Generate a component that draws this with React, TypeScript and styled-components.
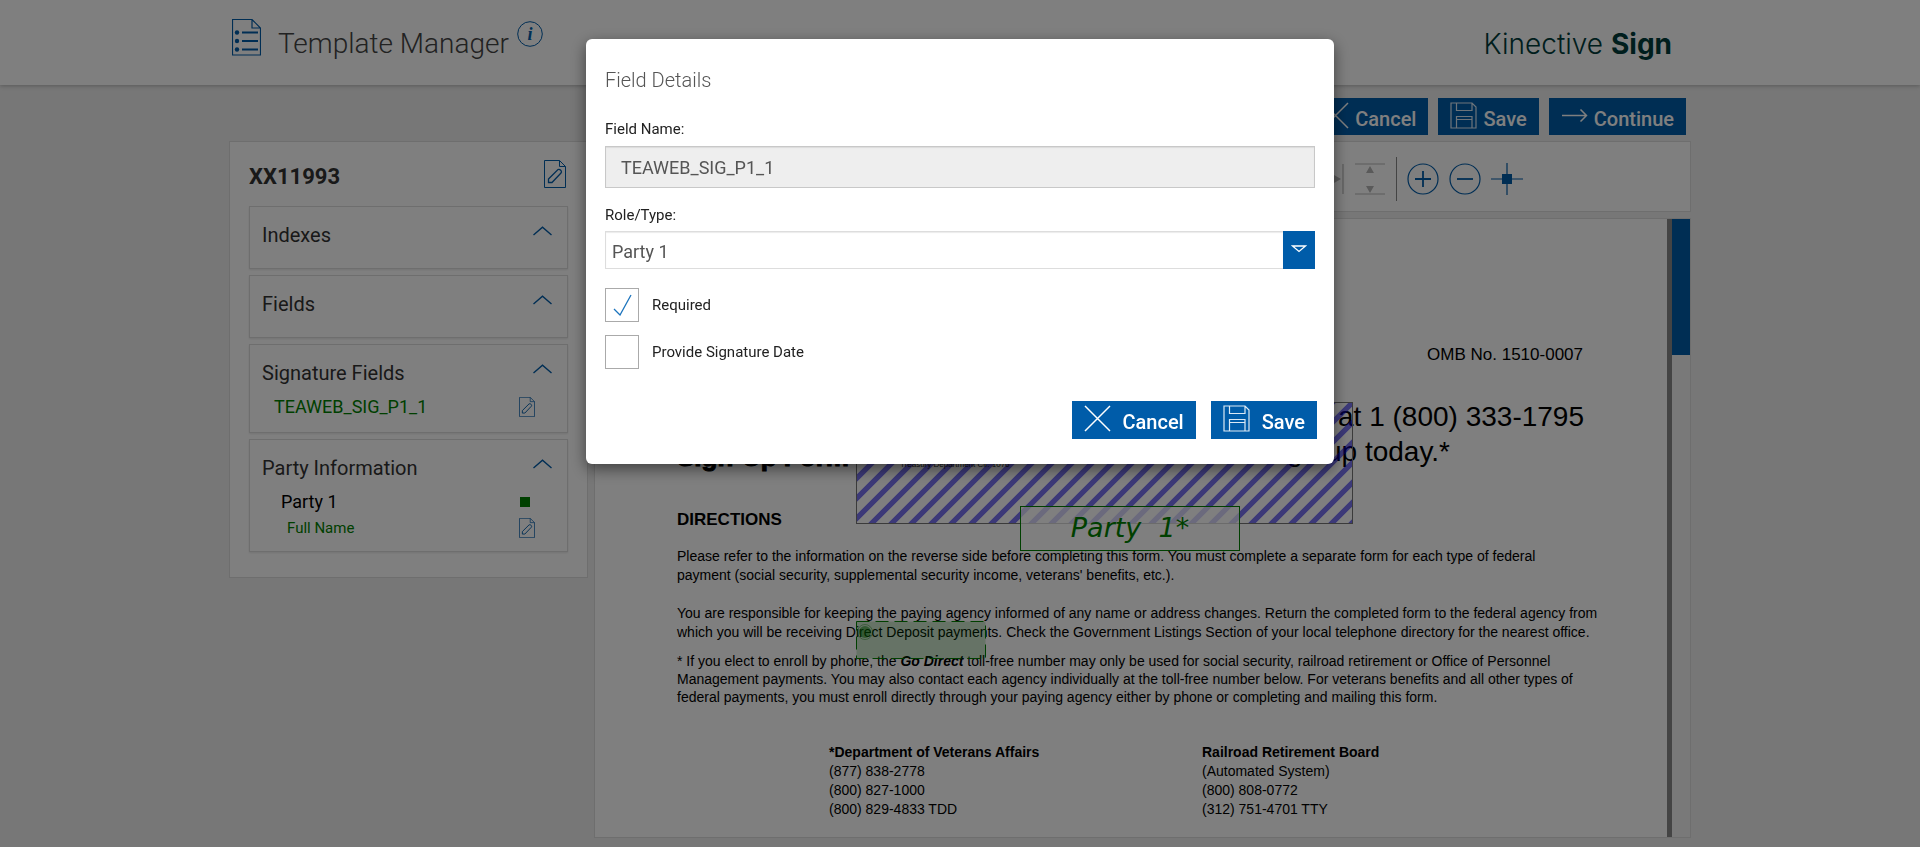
import React from "react";
import styled, { createGlobalStyle, css } from "styled-components";

const Global = createGlobalStyle`
  *, *::before, *::after { box-sizing: border-box; }
  body { margin: 0; background: #eee; font-family: Roboto, "Liberation Sans", sans-serif; color: #333; }
  button, input, select { font-family: inherit; }
  h1, h2, h3, p { margin: 0; font-weight: 400; }
  svg { display: block; flex: none; }
`;

const BLUE = "#005ca9";
const LINE = "#ddd";

const Page = styled.div`
  display: flex;
  flex-direction: column;
  min-height: 100vh;
`;

const Bounds = styled.div`
  width: 100%;
  max-width: 1462px;
  margin: 0 auto;
`;

const Header = styled.header`
  background: #fff;
  height: 85px;
  box-shadow: 0 1px 4px rgba(0, 0, 0, 0.25);
`;

const HeaderRow = styled(Bounds)`
  display: flex;
  align-items: flex-start;
  justify-content: space-between;
  padding: 0 19px 0 3px;
`;

const Brand = styled.div`
  display: flex;
  align-items: flex-start;
  padding-top: 19px;
`;

const AppTitle = styled.h1`
  font-size: 28px;
  line-height: 36px;
  font-weight: 300;
  color: #444;
  padding: 7px 8px 0 17px;
`;

const InfoButton = styled.button`
  border: 0;
  background: none;
  padding: 2px 0 0;
`;

const Logo = styled.div`
  padding-top: 26px;
  font-family: Inter, sans-serif;
  font-size: 28px;
  line-height: 36px;
  font-weight: 300;
  color: #003c3a;
  b { font-weight: 700; }
`;

const ActionBar = styled.div`
  display: flex;
  justify-content: flex-end;
  gap: 10px;
  padding: 13px 5px 6px;
`;

const Button = styled.button<{ $roomy?: boolean }>`
  display: flex;
  align-items: flex-start;
  gap: ${(p) => (p.$roomy ? 12 : 6)}px;
  height: ${(p) => (p.$roomy ? 38 : 37)}px;
  padding: 4px 12px 0;
  border: 0;
  background: ${BLUE};
  color: #fff;
  font-size: 20px;
  line-height: 34px;
  font-weight: 500;
`;

const Columns = styled.main`
  display: grid;
  grid-template-columns: 359px minmax(0, 1fr);
  gap: 6px;
  align-items: start;
`;

const panel = css`
  background: #fff;
  border: 1px solid ${LINE};
`;

const Sidebar = styled.aside`
  ${panel}
  padding: 18px 19px 25px;
`;

const SidebarHead = styled.div`
  display: flex;
  justify-content: space-between;
  align-items: flex-start;
  height: 46px;
  padding-right: 2px;
`;

const TemplateName = styled.h2`
  font-size: 22px;
  line-height: 34px;
  font-weight: 700;
`;

const Section = styled.section<{ $height: number }>`
  border: 1px solid ${LINE};
  box-shadow: 0 1px 2px rgba(0, 0, 0, 0.1);
  min-height: ${(p) => p.$height}px;
  padding: 14px 15px 0 12px;
  & + & { margin-top: 6px; }
`;

const SectionHead = styled.div`
  display: flex;
  justify-content: space-between;
  font-size: 20px;
  line-height: 28px;
  h3 { font-size: inherit; }
`;

const Toggle = styled.button`
  border: 0;
  background: none;
  padding: 5px 0 3px;
  height: 18px;
`;

const Entry = styled.div<{ $indent: number; $size: number; $tone: string }>`
  display: flex;
  justify-content: space-between;
  align-items: center;
  padding: 0 17px 0 ${(p) => p.$indent}px;
  font-size: ${(p) => p.$size}px;
  line-height: 26px;
  color: ${(p) => p.$tone};
`;

const EntryList = styled.div`
  padding-top: 7px;
`;

const IconButton = styled.button`
  border: 0;
  background: none;
  padding: 0;
`;

const Swatch = styled.span`
  width: 10px;
  height: 10px;
  margin-right: 5px;
  background: green;
`;

const Workspace = styled.div`
  display: flex;
  flex-direction: column;
  gap: 6px;
`;

const Toolbar = styled.div`
  ${panel}
  display: flex;
  justify-content: flex-end;
  align-items: center;
  gap: 10px;
  height: 71px;
  padding: 5px 167px 0 0;
`;

const Separator = styled.span`
  width: 1px;
  height: 44px;
  background: #888;
`;

const Viewer = styled.div`
  ${panel}
  display: flex;
  height: 620px;
`;

const Paper = styled.article`
  position: relative;
  flex: 1;
  min-width: 0;
  padding: 122px 30px 0 82px;
  font-family: "Liberation Sans", Arial, sans-serif;
  font-size: 14px;
  color: #000;
`;

const FormNumber = styled.p`
  font-size: 17px;
  line-height: 28px;
  text-align: right;
  padding-right: 54px;
`;

const FormIntro = styled.div`
  display: flex;
  justify-content: space-between;
  align-items: flex-end;
  padding: 30px 53px 0 0;
`;

const FormTitle = styled.h2`
  font-family: "Liberation Sans", sans-serif;
  font-size: 26px;
  line-height: 24px;
  font-weight: 700;
  -webkit-text-stroke: 1px #000;
`;

const Invite = styled.p`
  font-size: 28px;
  line-height: 35px;
  text-align: right;
  span { display: block; padding-right: 134px; }
`;

const DocHeading = styled.h3`
  font-size: 17px;
  line-height: 28px;
  font-weight: 700;
  padding-top: 37px;
  height: 78px;
`;

const Para = styled.p<{ $gap: number; $leading: number }>`
  line-height: ${(p) => p.$leading}px;
  white-space: nowrap;
  margin-bottom: ${(p) => p.$gap}px;
`;

const Contacts = styled.div`
  display: grid;
  grid-template-columns: 373px 1fr;
  padding-left: 152px;
  line-height: 19px;
`;

const Hatch = styled.div`
  position: absolute;
  left: 261px;
  top: 183px;
  width: 497px;
  height: 122px;
  border: 1px solid #777;
  background: linear-gradient(135deg, transparent 27%, rgba(10, 0, 230, 0.55) 29%, rgba(10, 0, 230, 0.55) 46%, transparent 48%, transparent 77%, rgba(10, 0, 230, 0.55) 79%, rgba(10, 0, 230, 0.55) 96%, transparent 98%) 0 0 / 20px 20px;
`;

const HatchNote = styled.span`
  position: absolute;
  left: 43px;
  bottom: 52px;
  font-family: "Liberation Sans", sans-serif;
  font-size: 8px;
  line-height: 12px;
  color: #222;
`;

const SignatureField = styled.div`
  position: absolute;
  left: 425px;
  top: 287px;
  width: 220px;
  height: 45px;
  border: 1px solid green;
  background: rgba(255, 255, 255, 0.7);
  color: green;
  font: italic 27px/42px "Lucida Handwriting", "DejaVu Sans", cursive;
  text-align: center;
  white-space: pre;
`;

const DateField = styled.svg`
  position: absolute;
  left: 261px;
  top: 402px;
`;

const PageEdge = styled.div`
  width: 5px;
  background: #888;
`;

const Rail = styled.div`
  width: 18px;
  background: #f2f2f2;
`;

const Thumb = styled.div`
  height: 136px;
  background: ${BLUE};
`;

const Backdrop = styled.div`
  position: fixed;
  inset: 0;
  display: flex;
  justify-content: center;
  align-items: flex-start;
  padding-top: 39px;
  background: rgba(0, 0, 0, 0.5);
`;

const Dialog = styled.form`
  width: 748px;
  padding: 26px 17px 25px 19px;
  border-radius: 6px;
  background: #fff;
  box-shadow: 0 5px 15px rgba(0, 0, 0, 0.5);
`;

const DialogTitle = styled.h2`
  font-size: 20px;
  line-height: 30px;
  font-weight: 300;
  color: #555;
  margin-bottom: 24px;
`;

const Label = styled.label`
  display: block;
  font-size: 15px;
  line-height: 20px;
  color: #222;
`;

const Field = styled.div<{ $space: number }>`
  padding-right: 2px;
  margin-bottom: ${(p) => p.$space}px;
`;

const TextInput = styled.input`
  display: block;
  width: 100%;
  height: 42px;
  margin-top: 7px;
  padding: 0 15px;
  border: 1px solid #c8c8c8;
  border-radius: 0;
  background: #eee;
  box-shadow: inset 0 1px 1px rgba(0, 0, 0, 0.08);
  font-size: 18px;
  color: #555;
`;

const SelectBox = styled.div`
  display: flex;
  height: 38px;
  margin-top: 6px;
`;

const Select = styled.select`
  appearance: none;
  flex: 1;
  padding: 2px 6px 0;
  border: 1px solid ${LINE};
  border-right: 0;
  border-radius: 0;
  background: #fff;
  box-shadow: inset 0 1px 1px rgba(0, 0, 0, 0.08);
  font-size: 18px;
  color: #555;
`;

const Drop = styled.span`
  display: flex;
  width: 32px;
  justify-content: center;
  padding-top: 14px;
  background: ${BLUE};
`;

const CheckRow = styled.label`
  display: flex;
  align-items: center;
  gap: 13px;
  height: 34px;
  margin-bottom: 13px;
  font-size: 15px;
  line-height: 20px;
  color: #222;
`;

const Check = styled.span`
  display: grid;
  width: 34px;
  height: 34px;
  > * { grid-area: 1 / 1; }
  svg { place-self: center; visibility: hidden; pointer-events: none; }
  input:checked + svg { visibility: visible; }
`;

const CheckInput = styled.input`
  appearance: none;
  width: 34px;
  height: 34px;
  margin: 0;
  border: 1px solid #aaa;
  background: #fff;
`;

const DialogActions = styled.div`
  display: flex;
  justify-content: flex-end;
  gap: 15px;
  padding-top: 19px;
`;

const CloseIcon = () => (
  <svg width="27" height="27" viewBox="0 0 27 27" stroke="#fff" strokeWidth="1.5" fill="none"><path d="M1 1 26 26M26 1 1 26" /></svg>
);
const SaveIcon = () => (
  <svg width="27" height="27" viewBox="0 0 27 27" stroke="#dbe9f5" strokeWidth="1.2" fill="none">
    <path d="M1 1H22L26 5V26H1ZM6.500 1V8.500H22V1M6.500 26V14.500H22V26M6.500 17.500H22" />
  </svg>
);
const ArrowIcon = () => (
  <svg width="27" height="27" viewBox="0 0 27 27" stroke="#fff" strokeWidth="1.500" fill="none"><path d="M1 13.500H25M19.500 7.500 25.500 13.500 19.500 19.500" /></svg>
);
const EditIcon = ({ w, h }: { w: number; h: number }) => (
  <svg width={w} height={h} viewBox="0 0 22 28" stroke={BLUE} fill="none" strokeWidth="1">
    <path d="M.5 .5H15.500L21.500 6.500V27.500H.5ZM15.500 .5V6.500H21.500" />
    <path d="M4.500 19 14 9.500Q15.500 9 17 10.500 18 12 17 13L8 22.500H4.500Z" strokeWidth="1.300" />
  </svg>
);
const Chevron = () => (
  <svg width="19" height="10" viewBox="0 0 19 10" stroke={BLUE} strokeWidth="1.400" fill="none"><path d="M.5 9 9.500 1.200 18.500 9" /></svg>
);
const ListIcon = () => (
  <svg width="29" height="37" viewBox="0 0 29 37" stroke={BLUE} fill="none">
    <path d="M.5 .5H20L28.500 9V36H.5ZM20 .5V9H28.500" strokeWidth="1.200" />
    <path d="M10 13.500H26M10 22H26M10 30.500H26" strokeWidth="1.800" />
    <g fill={BLUE} stroke="none"><circle cx="5" cy="13.500" r="2.200" /><circle cx="5" cy="22" r="2.200" /><circle cx="5" cy="30.500" r="2.200" /></g>
  </svg>
);
const InfoIcon = () => (
  <svg width="26" height="26" viewBox="0 0 26 26">
    <circle cx="13" cy="13" r="12.300" fill="none" stroke={BLUE} />
    <text x="13" y="19" textAnchor="middle" fill={BLUE} fontFamily="Liberation Serif, serif" fontStyle="italic" fontWeight="700" fontSize="18">i</text>
  </svg>
);
const Zoom = ({ plus }: { plus?: boolean }) => (
  <svg width="32" height="32" viewBox="0 0 32 32" stroke={BLUE} fill="none">
    <circle cx="16" cy="16" r="15" strokeWidth="1.200" />
    <path d={plus ? "M8 16H24M16 8V24" : "M8 16H24"} strokeWidth="1.800" />
  </svg>
);
const FitIcon = ({ turn }: { turn?: boolean }) => (
  <svg width="32" height="32" viewBox="0 0 32 32" stroke="#b5b5b5" fill="#b5b5b5">
    <g transform={turn ? "rotate(90 16 16)" : undefined}>
      <path d="M1 1H31M1 31H31" strokeWidth="1.200" />
      <path d="M12 10 16 3 20 10ZM12 23 16 30 20 23Z" stroke="none" />
    </g>
  </svg>
);
const TargetIcon = () => (
  <svg width="32" height="32" viewBox="0 0 32 32" stroke={BLUE}>
    <path d="M0 16H32M16 0V32" strokeWidth="1.200" />
    <rect x="11" y="11" width="10" height="10" fill={BLUE} stroke="none" />
  </svg>
);
const TickIcon = () => (
  <svg width="20" height="22" viewBox="0 0 20 22" fill="none" stroke="#1c74bd" strokeWidth="1.300"><path d="M2 15 8 21 19 1" /></svg>
);

function SectionTitle({ children }: { children: React.ReactNode }) {
  return (
    <SectionHead>
      <h3>{children}</h3>
      <Toggle type="button" aria-label="Collapse"><Chevron /></Toggle>
    </SectionHead>
  );
}

function CheckField({ label, checked }: { label: string; checked?: boolean }) {
  return (
    <CheckRow>
      <Check><CheckInput type="checkbox" defaultChecked={checked} /><TickIcon /></Check>
      {label}
    </CheckRow>
  );
}

export default function App() {
  return (
    <>
      <Global />
      <Page>
        <Header>
          <HeaderRow>
            <Brand>
              <ListIcon />
              <AppTitle>Template Manager</AppTitle>
              <InfoButton type="button" aria-label="Information"><InfoIcon /></InfoButton>
            </Brand>
            <Logo>Kinective <b>Sign</b></Logo>
          </HeaderRow>
        </Header>
        <Bounds>
          <ActionBar>
            <Button type="button"><CloseIcon />Cancel</Button>
            <Button type="button"><SaveIcon />Save</Button>
            <Button type="button"><ArrowIcon />Continue</Button>
          </ActionBar>
          <Columns>
            <Sidebar>
              <SidebarHead>
                <TemplateName>XX11993</TemplateName>
                <IconButton type="button" aria-label="Edit template"><EditIcon w={22} h={28} /></IconButton>
              </SidebarHead>
              <Section $height={63}><SectionTitle>Indexes</SectionTitle></Section>
              <Section $height={63}><SectionTitle>Fields</SectionTitle></Section>
              <Section $height={89}>
                <SectionTitle>Signature Fields</SectionTitle>
                <EntryList>
                  <Entry $indent={12} $size={18} $tone="green">
                    TEAWEB_SIG_P1_1
                    <IconButton type="button" aria-label="Edit signature field"><EditIcon w={16} h={20} /></IconButton>
                  </Entry>
                </EntryList>
              </Section>
              <Section $height={113}>
                <SectionTitle>Party Information</SectionTitle>
                <EntryList>
                  <Entry $indent={19} $size={18} $tone="#000">Party 1<Swatch /></Entry>
                  <Entry $indent={25} $size={15} $tone="green">
                    Full Name
                    <IconButton type="button" aria-label="Edit party"><EditIcon w={16} h={20} /></IconButton>
                  </Entry>
                </EntryList>
              </Section>
            </Sidebar>
            <Workspace>
              <Toolbar>
                <FitIcon turn />
                <FitIcon />
                <Separator />
                <Zoom plus />
                <Zoom />
                <TargetIcon />
              </Toolbar>
              <Viewer>
                <Paper>
                  <FormNumber>OMB No. 1510-0007</FormNumber>
                  <FormIntro>
                    <FormTitle>Sign-Up Form</FormTitle>
                    <Invite>at 1 (800) 333-1795<span>to sign up today.*</span></Invite>
                  </FormIntro>
                  <DocHeading>DIRECTIONS</DocHeading>
                  <Para $leading={19} $gap={19}>
                    Please refer to the information on the reverse side before completing this form. You must complete a separate form for each type of federal<br />
                    payment (social security, supplemental security income, veterans' benefits, etc.).
                  </Para>
                  <Para $leading={19} $gap={10}>
                    You are responsible for keeping the paying agency informed of any name or address changes. Return the completed form to the federal agency from<br />
                    which you will be receiving Direct Deposit payments. Check the Government Listings Section of your local telephone directory for the nearest office.
                  </Para>
                  <Para $leading={18} $gap={37}>
                    * If you elect to enroll by phone, the <b><i>Go Direct</i></b> toll-free number may only be used for social security, railroad retirement or Office of Personnel<br />
                    Management payments. You may also contact each agency individually at the toll-free number below. For veterans benefits and all other types of<br />
                    federal payments, you must enroll directly through your paying agency either by phone or completing and mailing this form.
                  </Para>
                  <Contacts>
                    <p><b>*Department of Veterans Affairs</b><br />(877) 838-2778<br />(800) 827-1000<br />(800) 829-4833 TDD</p>
                    <p><b>Railroad Retirement Board</b><br />(Automated System)<br />(800) 808-0772<br />(312) 751-4701 TTY</p>
                  </Contacts>
                  <Hatch><HatchNote>Treasury Department Cir. 1076</HatchNote></Hatch>
                  <SignatureField>Party  1*</SignatureField>
                  <DateField width="130" height="38" viewBox="0 0 130 38">
                    <rect x=".5" y=".5" width="129" height="37" fill="rgba(0,128,0,.2)" stroke="green" strokeDasharray="13 6" />
                    <circle cx="9" cy="11" r="7.500" fill="none" stroke="rgba(0,128,0,.4)" />
                    <circle cx="9" cy="11" r="6" fill="rgba(0,128,0,.5)" />
                  </DateField>
                </Paper>
                <PageEdge />
                <Rail><Thumb /></Rail>
              </Viewer>
            </Workspace>
          </Columns>
        </Bounds>
      </Page>
      <Backdrop>
        <Dialog role="dialog" aria-labelledby="dialog-title">
          <DialogTitle id="dialog-title">Field Details</DialogTitle>
          <Field $space={17}>
            <Label htmlFor="field-name">Field Name:</Label>
            <TextInput id="field-name" readOnly value="TEAWEB_SIG_P1_1" />
          </Field>
          <Field $space={19}>
            <Label htmlFor="role">Role/Type:</Label>
            <SelectBox>
              <Select id="role" defaultValue="Party 1"><option>Party 1</option></Select>
              <Drop>
                <svg width="16" height="8" viewBox="0 0 16 8" fill="none" stroke="#fff" strokeWidth="1.300"><path d="M1.500 1H14.500L8 6.500Z" /></svg>
              </Drop>
            </SelectBox>
          </Field>
          <CheckField label="Required" checked />
          <CheckField label="Provide Signature Date" />
          <DialogActions>
            <Button type="button" $roomy><CloseIcon />Cancel</Button>
            <Button type="button" $roomy><SaveIcon />Save</Button>
          </DialogActions>
        </Dialog>
      </Backdrop>
    </>
  );
}
